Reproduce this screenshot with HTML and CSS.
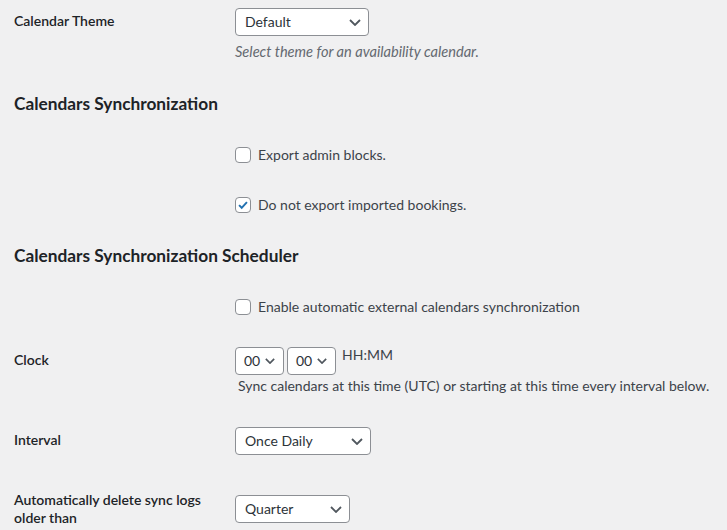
FILE: index.html
```html
<!DOCTYPE html>
<html>
<head>
<meta charset="utf-8">
<link rel="stylesheet" href="styles.css">
</head>
<body>
<div class="page">
  <div class="row r-theme">
    <div class="label">Calendar Theme</div>
    <div class="field">
      <div class="select w-default"><span>Default</span><svg class="chev" viewBox="0 0 12 7"><path d="M1 1l5 5 5-5"/></svg></div>
      <p class="desc italic">Select theme for an availability calendar.</p>
    </div>
  </div>

  <h2 class="h2 h2-first">Calendars Synchronization</h2>

  <div class="row r-check1">
    <div></div>
    <label class="check"><span class="box"></span>Export admin blocks.</label>
  </div>
  <div class="row r-check2">
    <div></div>
    <label class="check"><span class="box checked"><svg viewBox="0 0 16 16"><path d="M3.5 8.2l3 3 6-6.6"/></svg></span>Do not export imported bookings.</label>
  </div>

  <h2 class="h2 h2-second">Calendars Synchronization Scheduler</h2>

  <div class="row r-check3">
    <div></div>
    <label class="check"><span class="box"></span>Enable automatic external calendars synchronization</label>
  </div>

  <div class="row r-clock">
    <div class="label">Clock</div>
    <div class="field">
      <div class="time">
        <div class="select w-time"><span>00</span><svg class="chev chev-sm" viewBox="0 0 12 7"><path d="M1 1l5 5 5-5"/></svg></div>
        <div class="select w-time"><span>00</span><svg class="chev chev-sm" viewBox="0 0 12 7"><path d="M1 1l5 5 5-5"/></svg></div>
        <span class="hhmm">HH:MM</span>
      </div>
      <p class="desc plain">Sync calendars at this time (UTC) or starting at this time every interval below.</p>
    </div>
  </div>

  <div class="row r-interval">
    <div class="label">Interval</div>
    <div class="field">
      <div class="select w-interval"><span>Once Daily</span><svg class="chev" viewBox="0 0 12 7"><path d="M1 1l5 5 5-5"/></svg></div>
    </div>
  </div>

  <div class="row r-delete">
    <div class="label">Automatically delete sync logs older than</div>
    <div class="field">
      <div class="select w-quarter"><span>Quarter</span><svg class="chev" viewBox="0 0 12 7"><path d="M1 1l5 5 5-5"/></svg></div>
    </div>
  </div>
</div>
</body>
</html>
```
FILE: styles.css
```css
html, body {
  margin: 0;
  padding: 0;
  background: #f0f0f1;
}
body {
  font-family: "Lato", "Noto Sans", sans-serif;
  font-size: 14px;
  color: #3c434a;
  overflow: hidden;
}
.page {
  padding: 8px 0 0 14px;
}
.row {
  display: grid;
  grid-template-columns: 221px auto;
  align-items: start;
}
.label {
  font-weight: 600;
  color: #1d2327;
  line-height: 18px;
  margin-top: 4px;
  width: 200px;
}
.field {
  display: flex;
  flex-direction: column;
  align-items: flex-start;
}
.select {
  box-sizing: border-box;
  height: 28px;
  border: 1px solid #8c8f94;
  border-radius: 4px;
  background: #fff;
  color: #2c3338;
  display: flex;
  align-items: center;
  justify-content: space-between;
  padding: 0 7px 0 9px;
  line-height: 18px;
}
.chev {
  width: 12px;
  height: 7px;
  fill: none;
  stroke: #50575e;
  stroke-width: 1.8;
}
.chev-sm {
  width: 10px;
  height: 6px;
  stroke-width: 2;
}
.w-default { width: 134px; }
.w-time { width: 49px; padding: 0 8px 0 8px; }
.w-interval { width: 136px; }
.w-quarter { width: 115px; }
.desc {
  margin: 0;
  line-height: 18px;
  white-space: nowrap;
}
.italic {
  font-style: italic;
  font-size: 14.6px;
  color: #646970;
  margin-top: 7px;
}
.plain {
  color: #3c434a;
  margin-top: 2px;
  margin-left: 3px;
}
.h2 {
  margin: 0;
  font-size: 17.3px;
  font-weight: 700;
  color: #1d2327;
  line-height: 24px;
}
.h2-first { margin-top: 31px; }
.h2-second { margin-top: 29px; }
.check {
  display: flex;
  align-items: center;
  height: 20px;
  line-height: 20px;
  color: #3c434a;
}
.box {
  box-sizing: border-box;
  width: 16px;
  height: 16px;
  border: 1px solid #8c8f94;
  border-radius: 4px;
  background: #fff;
  margin-right: 7px;
  display: flex;
}
.box svg {
  width: 14px;
  height: 14px;
  fill: none;
  stroke: #2271b1;
  stroke-width: 2.2;
}
.r-check1 { margin-top: 29px; }
.r-check2 { margin-top: 30px; }
.r-check3 { margin-top: 29px; }
.r-clock { margin-top: 30px; }
.time {
  display: flex;
  align-items: flex-start;
  gap: 3px;
}
.hhmm {
  margin-left: 3px;
  margin-top: -1px;
  line-height: 18px;
}
.r-interval { margin-top: 32px; }
.r-delete { margin-top: 36px; }
.r-delete .label { margin-top: 0; }
.r-delete .field { margin-top: 4px; }
```
